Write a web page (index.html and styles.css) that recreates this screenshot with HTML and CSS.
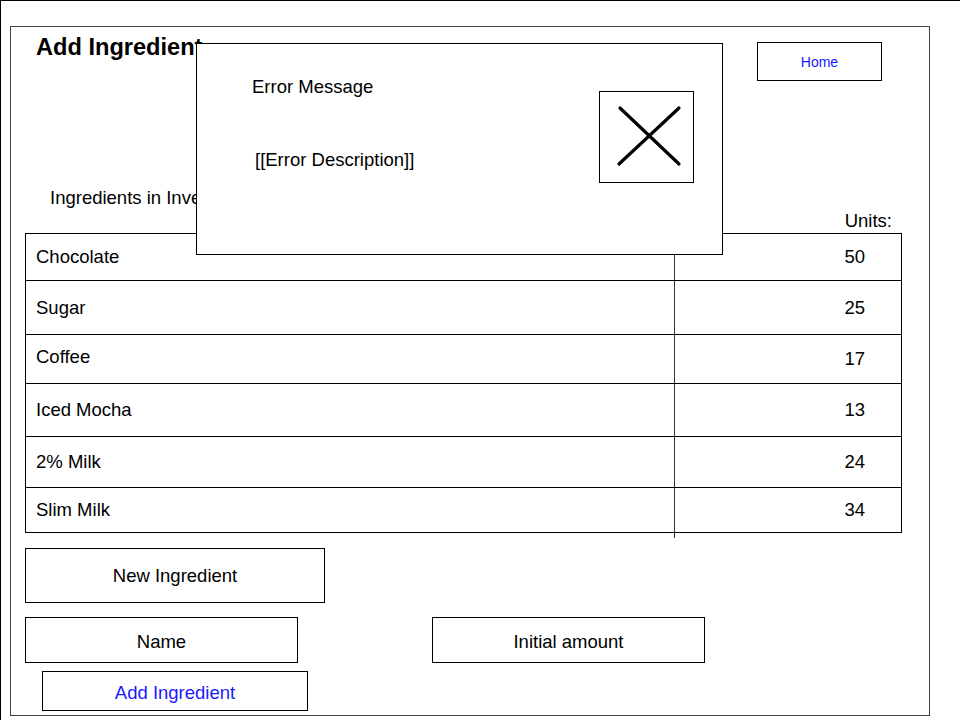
FILE: index.html
```html
<!DOCTYPE html>
<html lang="en">
<head>
    <meta charset="UTF-8">
    <meta name="viewport" content="width=device-width, initial-scale=1.0">
    <title>Add Ingredient</title>
    <link rel="stylesheet" href="styles.css">
</head>
<body>
    <div class="page">
        <div class="frame">
            <div class="header">
                <h1>Add Ingredient</h1>
                <button type="button" class="home-btn">Home</button>
            </div>

            <div class="inv-head">
                <span class="inv-label">Ingredients in Inventory</span>
                <span class="units-label">Units:</span>
            </div>

            <div class="inventory">
                <div class="row"><div class="name">Chocolate</div><div class="amount">50</div></div>
                <div class="row"><div class="name">Sugar</div><div class="amount">25</div></div>
                <div class="row"><div class="name">Coffee</div><div class="amount">17</div></div>
                <div class="row"><div class="name">Iced Mocha</div><div class="amount">13</div></div>
                <div class="row"><div class="name">2% Milk</div><div class="amount">24</div></div>
                <div class="row"><div class="name">Slim Milk</div><div class="amount">34</div></div>
            </div>

            <div class="box new-box">New Ingredient</div>

            <div class="fields">
                <div class="box field">Name</div>
                <div class="box field amount-field">Initial amount</div>
            </div>

            <button type="button" class="box add-btn">Add Ingredient</button>
        </div>

        <div class="modal">
            <div class="modal-text">
                <div class="modal-title">Error Message</div>
                <div class="modal-desc">[[Error Description]]</div>
            </div>
            <div class="close-box">
                <svg width="93" height="90" viewBox="0 0 93 90">
                    <line x1="20" y1="16" x2="79" y2="72" stroke="#000" stroke-width="3.2" stroke-linecap="round"/>
                    <line x1="79" y1="16" x2="19" y2="72" stroke="#000" stroke-width="3.2" stroke-linecap="round"/>
                </svg>
            </div>
        </div>
    </div>
</body>
</html>
```

FILE: styles.css
```css
* {
    box-sizing: border-box;
}
body {
    margin: 0;
    font-family: "Liberation Sans", Arial, sans-serif;
    font-size: 18.5px;
    color: #000;
    background-color: #fff;
}
.page {
    position: relative;
    width: 960px;
    height: 720px;
    border-top: 1px solid #000;
    border-left: 1px solid #000;
    overflow: hidden;
}
.frame {
    width: 920px;
    height: 690px;
    margin: 25px 0 0 9px;
    padding: 0 27px 0 14px;
    border: 1px solid #444;
}
.header {
    display: flex;
    justify-content: space-between;
    align-items: flex-start;
    height: 54px;
}
h1 {
    margin: 6px 0 0 11px;
    font-size: 23.6px;
    line-height: 28px;
    font-weight: bold;
}
.home-btn {
    width: 125px;
    height: 39px;
    margin: 15px 20px 0 0;
    background: #fff;
    border: 1px solid #000;
    font-family: inherit;
    font-size: 14px;
    color: #1a1aff;
    padding: 0;
}
.inv-head {
    display: flex;
    justify-content: space-between;
    align-items: flex-end;
    margin-top: 106px;
    line-height: 21px;
}
.inv-label {
    margin: 0 0 23px 25px;
}
.units-label {
    margin-right: 10px;
}
.inventory {
    position: relative;
    width: 877px;
    margin-top: 2px;
    border: 1px solid #000;
}
.inventory::after {
    content: "";
    position: absolute;
    left: 648px;
    bottom: -6px;
    width: 1px;
    height: 6px;
    background-color: #222;
}
.row {
    display: grid;
    grid-template-columns: 648px 1fr;
    border-top: 1px solid #000;
}
.row:first-child {
    border-top: none;
    height: 46px;
}
.row:nth-child(2) { height: 54px; }
.row:nth-child(3) { height: 49px; }
.row:nth-child(3) .name { padding-bottom: 5px; }
.row:nth-child(4) { height: 53px; }
.row:nth-child(5) { height: 51px; }
.row:nth-child(6) { height: 45px; }
.name {
    display: flex;
    align-items: center;
    padding-left: 10px;
}
.amount {
    display: flex;
    align-items: center;
    justify-content: flex-end;
    padding-right: 36px;
    border-left: 1px solid #333;
}
.box {
    display: flex;
    align-items: center;
    justify-content: center;
    border: 1px solid #000;
    background: #fff;
}
.new-box {
    width: 300px;
    height: 55px;
    margin-top: 15px;
}
.fields {
    display: flex;
    gap: 134px;
    margin-top: 14px;
}
.field {
    width: 273px;
    height: 46px;
    padding-top: 3px;
}
.add-btn {
    width: 266px;
    height: 40px;
    margin: 8px 0 0 17px;
    padding: 3px 0 0;
    font-family: inherit;
    font-size: 18.5px;
    color: #1a1aff;
}
.modal {
    position: absolute;
    left: 195px;
    top: 42px;
    width: 527px;
    height: 212px;
    display: flex;
    justify-content: space-between;
    align-items: flex-start;
    padding: 32px 28px 0 55px;
    background-color: #fff;
    border: 1px solid #000;
    line-height: 21px;
}
.modal-desc {
    margin: 52px 0 0 3px;
}
.close-box {
    width: 95px;
    height: 92px;
    margin-top: 15px;
    border: 1px solid #000;
}
.close-box svg {
    display: block;
}
```
